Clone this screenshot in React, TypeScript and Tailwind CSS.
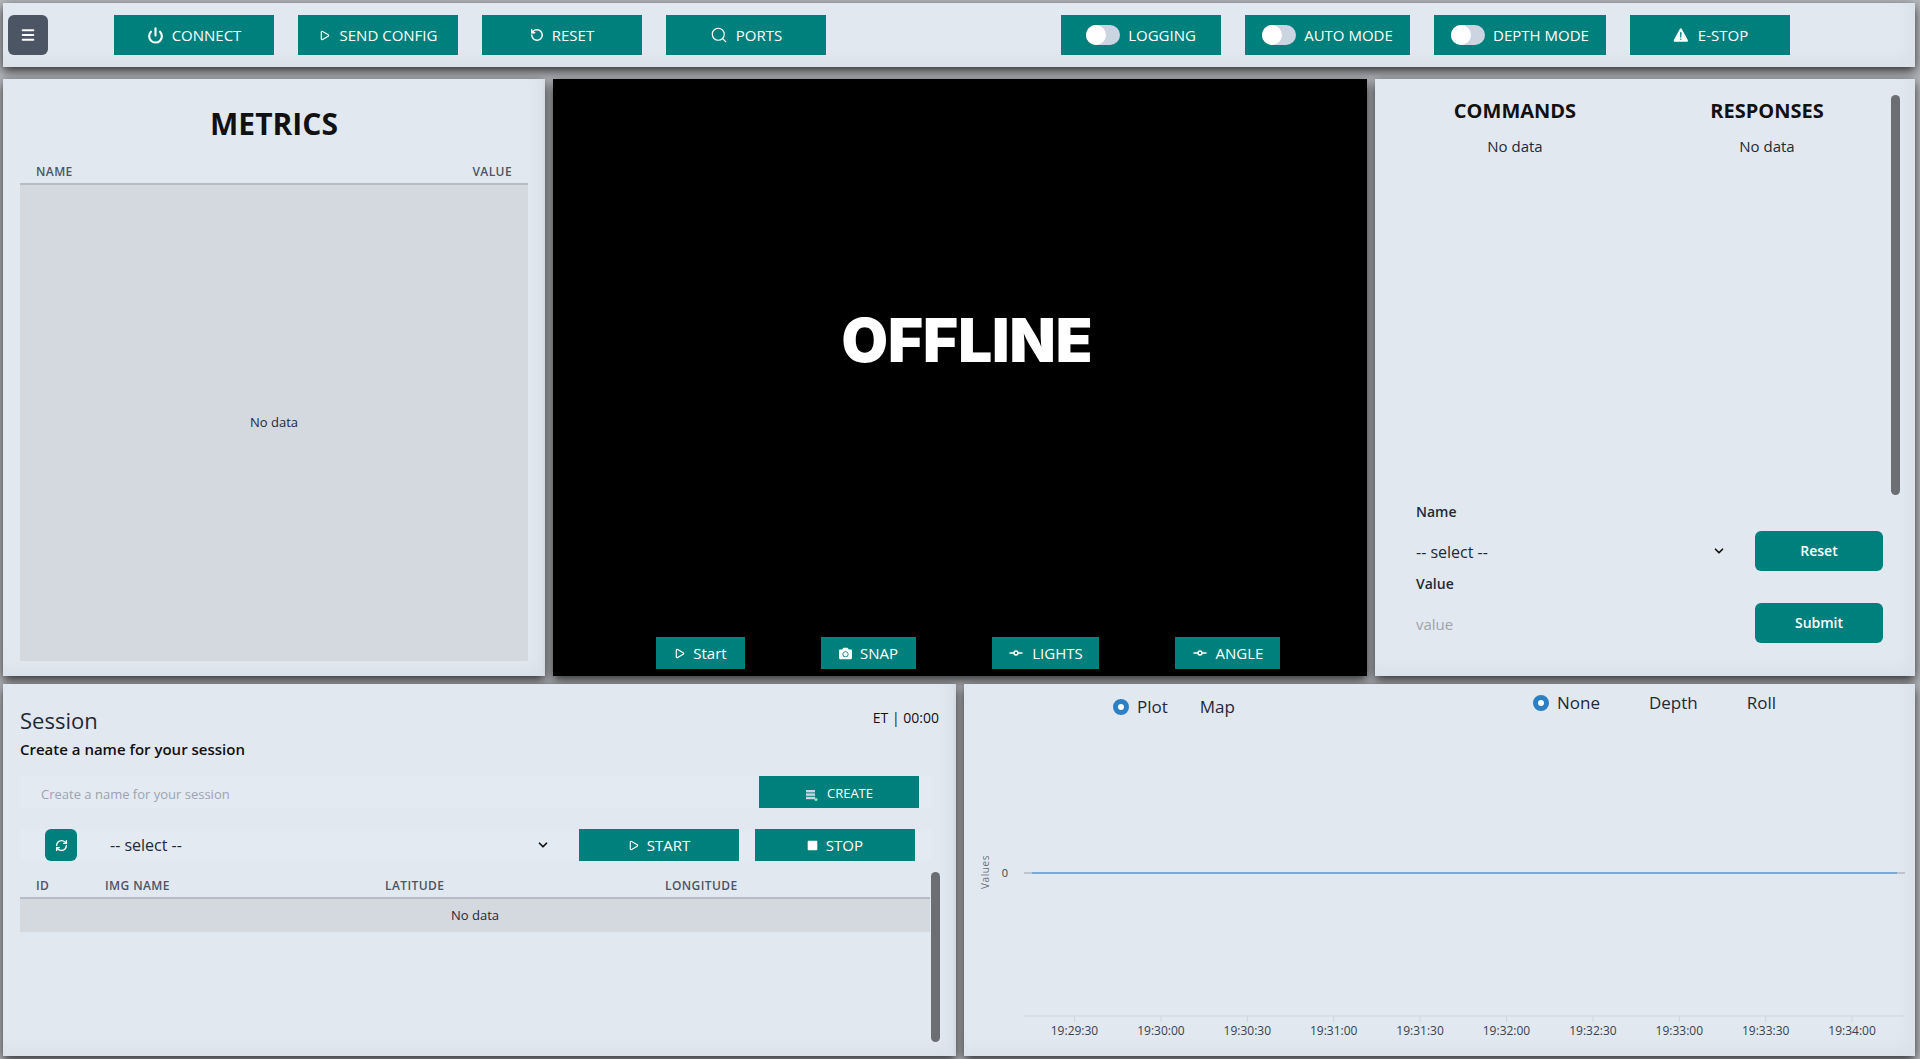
import React from 'react';
import { Power, Play, RotateCcw, Search, GitCommitHorizontal, RefreshCw, Menu, ChevronDown } from 'lucide-react';
import { FaCamera, FaSquare } from 'react-icons/fa';
import { IoWarning } from 'react-icons/io5';

const tealBtn = 'flex items-center justify-center gap-2 bg-[#00807c] text-white text-[15px] shrink-0';
const panel = 'bg-[#e2e8f0] shrink-0 shadow-[0_4px_10px_rgba(0,0,0,0.75),inset_-8px_-8px_16px_rgba(0,0,0,0.03)]';

function Toggle() {
  return (
    <span className="relative block w-[34px] h-5 rounded-full bg-[#cbd5e1]">
      <span className="absolute left-0 top-0 w-5 h-5 rounded-full bg-white" />
    </span>
  );
}

function Radio({ label, checked }: { label: string; checked?: boolean }) {
  return (
    <span className="flex items-center gap-2 text-[17px] text-[#1f2937]">
      {checked && <span className="w-4 h-4 rounded-full border-[5px] border-[#2b7fc4] bg-white" />}
      {label}
    </span>
  );
}

function Chart() {
  const ticks = ['19:29:30', '19:30:00', '19:30:30', '19:31:00', '19:31:30', '19:32:00', '19:32:30', '19:33:00', '19:33:30', '19:34:00'];
  return (
    <svg width="951" height="371" viewBox="964 684 951 371" className="absolute left-0 top-0" style={{ fontFamily: '"Open Sans", sans-serif' }}>
      <text x="0" y="0" transform="translate(989 872) rotate(-90)" textAnchor="middle" fontSize="10" letterSpacing="0.6" fill="#6b7280">Values</text>
      <text x="1005" y="877" textAnchor="middle" fontSize="11" fill="#374151">0</text>
      <line x1="1024" x2="1905" y1="873" y2="873" stroke="#9ca3af" />
      <line x1="1032" x2="1897" y1="873" y2="873" stroke="#7aa9d6" strokeWidth="2" />
      <line x1="1024" x2="1905" y1="1016" y2="1016" stroke="#cbd5e1" />
      {ticks.map((t, i) => (
        <g key={t}>
          <line x1={1074.5 + i * 86.4} x2={1074.5 + i * 86.4} y1="1016" y2="1022" stroke="#cbd5e1" />
          <text x={1074.5 + i * 86.4} y="1035" textAnchor="middle" fontSize="12" fill="#374151">{t}</text>
        </g>
      ))}
    </svg>
  );
}

function CreateIcon() {
  return (
    <svg width="14" height="14" viewBox="0 0 14 14" className="mt-0.5">
      <rect x="1" y="2" width="9" height="2.4" fill="#cbd5e1" />
      <rect x="1" y="5.4" width="9" height="2.4" fill="#cbd5e1" />
      <rect x="1" y="8.8" width="9" height="2.4" fill="#cbd5e1" />
      <rect x="9.5" y="10" width="3" height="3" rx="1.5" fill="#86efac" />
    </svg>
  );
}

export default function App() {
  return (
    <div
      className="h-[1059px] w-[1920px] overflow-hidden bg-[#b4b7bc] p-[3px] pr-[5px] flex flex-col gap-3 text-[#111111]"
      style={{ fontFamily: '"Open Sans", "Noto Sans", sans-serif' }}
    >
      {/* top bar */}
      <header className={`${panel} h-16 flex items-center pl-[5px]`}>
        <button className="w-10 h-10 rounded-md bg-[#4b5563] text-white flex items-center justify-center">
          <Menu size={16} strokeWidth={3} />
        </button>
        <div className="flex gap-6 ml-[66px]">
          <button className={`${tealBtn} w-40 h-10`}><Power size={17} strokeWidth={3} />CONNECT</button>
          <button className={`${tealBtn} w-40 h-10 gap-2.5`}><Play size={11} strokeWidth={2.5} />SEND CONFIG</button>
          <button className={`${tealBtn} w-40 h-10`}><RotateCcw size={14} strokeWidth={2.5} />RESET</button>
          <button className={`${tealBtn} w-40 h-10`}><Search size={18} strokeWidth={1.5} />PORTS</button>
        </div>
        <div className="flex gap-6 ml-[235px]">
          <button className={`${tealBtn} w-40 h-10`}><Toggle />LOGGING</button>
          <button className={`${tealBtn} w-[165px] h-10`}><Toggle />AUTO MODE</button>
          <button className={`${tealBtn} w-[172px] h-10`}><Toggle />DEPTH MODE</button>
          <button className={`${tealBtn} w-40 h-10`}><IoWarning size={18} />E-STOP</button>
        </div>
      </header>

      {/* middle row */}
      <div className="flex gap-2 h-[597px] shrink-0">
        <section className={`${panel} w-[542px] flex flex-col px-[17px] pb-[15px]`}>
          <h1 className="text-3xl font-bold text-center mt-[27px] leading-9">METRICS</h1>
          <div className="mt-[22px] flex justify-between px-4 text-xs font-semibold tracking-[0.4px] text-[#4b5563] h-[19px] border-b-2 border-[#b6bcc6] box-content">
            <span>NAME</span>
            <span>VALUE</span>
          </div>
          <div className="flex-1 bg-[#d4d8df] flex items-center justify-center text-[13px] text-[#1f2937]">No data</div>
        </section>

        <section className="w-[814px] shrink-0 bg-black shadow-[0_4px_10px_rgba(0,0,0,0.75)] flex flex-col">
          <div className="flex-1 flex items-center justify-center pb-[36px] pl-[14px]">
            <span className="text-6xl font-black text-white" style={{ fontFamily: 'Inter, sans-serif' }}>OFFLINE</span>
          </div>
          <div className="flex pl-[103px] pb-[7px]">
            <button className={`${tealBtn} w-[89px] h-8`}><Play size={11} strokeWidth={2.5} />Start</button>
            <button className={`${tealBtn} w-[95px] h-8 ml-[76px]`}><FaCamera size={13} />SNAP</button>
            <button className={`${tealBtn} w-[107px] h-8 ml-[76px]`}><GitCommitHorizontal size={16} />LIGHTS</button>
            <button className={`${tealBtn} w-[105px] h-8 ml-[76px]`}><GitCommitHorizontal size={16} />ANGLE</button>
          </div>
        </section>

        <section className={`${panel} w-[540px] relative flex flex-col`}>
          <div className="absolute right-[15px] top-[16px] w-[9px] h-[400px] rounded-full bg-[#6b6e72]" />
          <div className="flex mt-[18px]">
            <div className="w-[280px] text-center">
              <h2 className="text-xl font-bold leading-7">COMMANDS</h2>
              <p className="text-[15px] leading-5 mt-[11px] text-[#1f2937]">No data</p>
            </div>
            <div className="w-[224px] text-center">
              <h2 className="text-xl font-bold leading-7">RESPONSES</h2>
              <p className="text-[15px] leading-5 mt-[11px] text-[#1f2937]">No data</p>
            </div>
          </div>
          <div className="mt-auto mb-[33px] ml-[41px] mr-[32px]">
            <label className="block text-sm font-semibold text-[#1f2937] h-5 leading-5">Name</label>
            <div className="flex items-center h-10 mt-[9px] justify-between">
              <span className="text-base mt-[2px] text-[#1f2937]">-- select --</span>
              <span className="flex items-center gap-[29px]">
                <ChevronDown size={14} strokeWidth={3} />
                <button className="w-32 h-10 rounded-md bg-[#00807c] text-white text-sm font-semibold">Reset</button>
              </span>
            </div>
            <label className="block text-sm font-semibold text-[#1f2937] mt-[3px] h-5 leading-5">Value</label>
            <div className="flex items-center h-10 mt-[9px] justify-between">
              <span className="text-[15px] mt-[2px] text-[#9ca3af]">value</span>
              <button className="w-32 h-10 rounded-md bg-[#00807c] text-white text-sm font-semibold">Submit</button>
            </div>
          </div>
        </section>
      </div>

      {/* bottom row */}
      <div className="flex gap-2 flex-1 -mt-1">
        <section className={`${panel} w-[953px] relative px-[17px]`}>
          <div className="absolute right-[16px] top-[188px] w-[9px] h-[170px] rounded-full bg-[#6b6e72]" />
          <div className="flex justify-between items-start">
            <h2 className="text-[22px] leading-8 mt-[20px] text-[#1f2937]">Session</h2>
            <span className="text-sm mt-[24px]">ET | 00:00</span>
          </div>
          <p className="text-[15px] font-semibold leading-5 mt-[3px]">Create a name for your session</p>
          <div className="flex items-center h-8 mt-[17px] pl-[21px] w-[912px] bg-[#e4eaf2] justify-between">
            <span className="text-[13px] mt-[6px] text-[#9ca3af]">Create a name for your session</span>
            <button className={`${tealBtn} w-40 h-8 mr-[13px] !text-[13px] pt-[3px]`}><CreateIcon />CREATE</button>
          </div>
          <div className="flex items-center h-8 mt-[21px] pl-[25px] w-[912px] bg-[#e4eaf2]">
            <button className="w-8 h-8 rounded-md bg-[#00807c] text-white flex items-center justify-center"><RefreshCw size={13} strokeWidth={2.5} /></button>
            <span className="text-base ml-[33px] text-[#1f2937]">-- select --</span>
            <ChevronDown size={14} strokeWidth={3} className="ml-[354px]" />
            <button className={`${tealBtn} w-40 h-8 ml-[29px]`}><Play size={11} strokeWidth={2.5} />START</button>
            <button className={`${tealBtn} w-40 h-8 ml-4`}><FaSquare size={11} />STOP</button>
          </div>
          <div className="flex mt-[17px] h-[19px] text-xs font-semibold tracking-[0.4px] text-[#4b5563] w-[910px] border-b-2 border-[#b6bcc6] box-content">
            <span className="w-[85px] pl-4">ID</span>
            <span className="w-[280px]">IMG NAME</span>
            <span className="w-[280px]">LATITUDE</span>
            <span>LONGITUDE</span>
          </div>
          <div className="w-[910px] h-[33px] bg-[#d4d8df] flex items-center justify-center text-[13px] text-[#1f2937]">No data</div>
        </section>

        <section className={`${panel} w-[951px] relative`}>
          <Chart />
          <div className="relative flex items-start">
            <div className="flex gap-8 ml-[149px] mt-[10px]">
              <Radio label="Plot" checked />
              <Radio label="Map" />
            </div>
            <div className="flex gap-[49px] ml-[298px] mt-[6px]">
              <Radio label="None" checked />
              <Radio label="Depth" />
              <Radio label="Roll" />
            </div>
          </div>
        </section>
      </div>
    </div>
  );
}
